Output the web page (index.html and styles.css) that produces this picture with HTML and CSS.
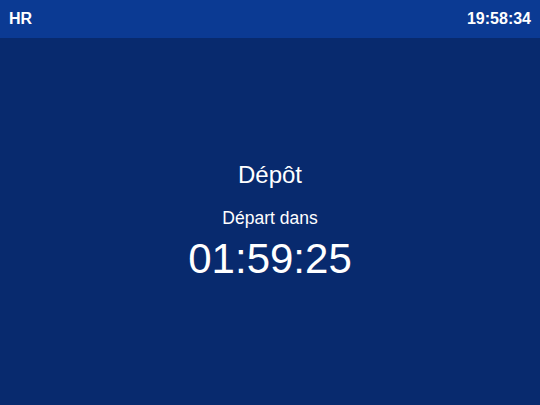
FILE: index.html
```html
<!DOCTYPE html>
<html lang="fr">
<head>
<meta charset="utf-8">
<link rel="stylesheet" href="styles.css">
</head>
<body>
<div class="screen">
  <header class="topbar">
    <span class="brand">HR</span>
    <span class="clock">19:58:34</span>
  </header>
  <main class="main">
    <div class="station">Dépôt</div>
    <div class="label">Départ dans</div>
    <div class="countdown">01:59:25</div>
  </main>
</div>
</body>
</html>
```
FILE: styles.css
```css
html, body {
  margin: 0;
  padding: 0;
  width: 540px;
  height: 405px;
  overflow: hidden;
}
body {
  font-family: "Liberation Sans", Arial, sans-serif;
  color: #ffffff;
  background: #082a6e;
}
.screen {
  display: flex;
  flex-direction: column;
  height: 405px;
}
.topbar {
  height: 38px;
  flex: 0 0 38px;
  background: #0b3a93;
  display: flex;
  align-items: center;
  justify-content: space-between;
  padding: 0 9px;
  font-weight: bold;
  font-size: 16px;
}
.main {
  flex: 1;
  display: flex;
  flex-direction: column;
  align-items: center;
  justify-content: center;
}
.station {
  font-size: 24px;
  line-height: 28px;
}
.label {
  font-size: 17.5px;
  line-height: 21px;
  margin-top: 19px;
}
.countdown {
  font-size: 42px;
  line-height: 48px;
  margin-top: 6px;
}
```
